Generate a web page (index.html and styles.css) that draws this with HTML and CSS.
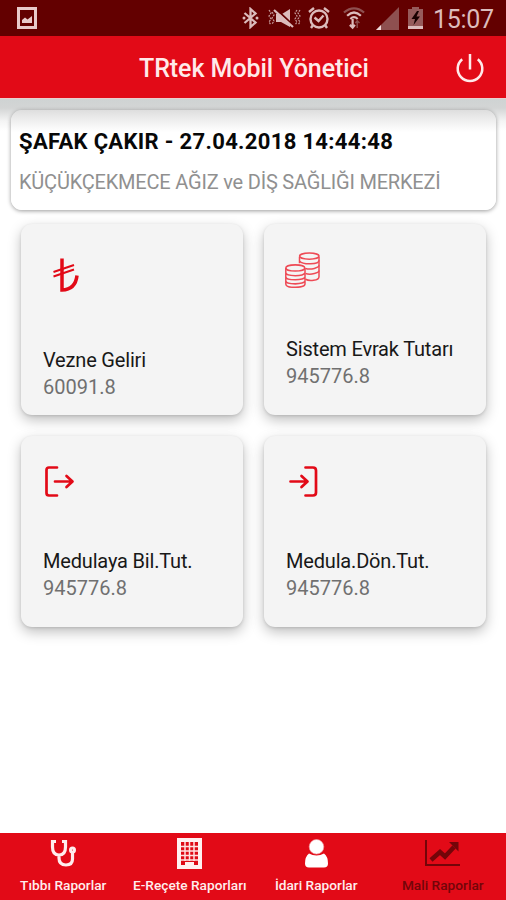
FILE: index.html
```html
<!DOCTYPE html>
<html lang="tr">
<head>
  <meta charset="UTF-8" />
  <meta name="viewport" content="width=device-width, initial-scale=1.0"/>
  <title>TRtek Mobil Yönetici</title>
  <link rel="stylesheet" href="styles.css">
</head>
<body>
  <div class="statusbar">
    <svg width="20" height="22" viewBox="0 0 20 22"><path d="M1.500 1.500H18.500V20.500H1.500Z" fill="none" stroke="#e8caca" stroke-width="3"/><path d="M5 16V13L8 10.500L10.500 12.500L15 9V16Z" fill="#e8caca"/></svg>
    <div class="status-icons">
      <svg width="17" height="22" viewBox="0 0 17 22" fill="none" stroke="#dcbcbc" stroke-width="2.300"><path d="M2.500 6L13.500 15.500L8.500 20V2L13.500 6.500L2.500 16"/><circle cx="2" cy="11" r="1.500" fill="#dcbcbc" stroke="none"/><circle cx="15" cy="11" r="1.500" fill="#dcbcbc" stroke="none"/></svg>
      <svg width="34" height="22" viewBox="0 0 34 22" fill="none"><path d="M9 7H15L23 2V20L14 15H9Z" fill="#dcbcbc"/><path d="M9 2L28 20" stroke="#630000" stroke-width="2"/><path d="M7 3L26 20" stroke="#dcbcbc" stroke-width="2.200"/><path d="M2 3L4 6L2 9L4 12L2 15L4 18M5 5L7 8L5 11L7 14L5 17M30 3L28 6L30 9L28 12L30 15L28 18M33 3L31 6L33 9L31 12L33 15L31 18" stroke="#c69c9c" stroke-width="1.200" stroke-dasharray="2 1"/></svg>
      <svg width="22" height="22" viewBox="0 0 22 22" fill="none" stroke="#dcbcbc" stroke-width="2.400"><circle cx="11" cy="12" r="8.500"/><path d="M1 5L6 1M21 5L16 1M6.500 10.500L10.500 14L15.500 8.500M5 18L3 21M17 18L19 21"/></svg>
      <svg width="22" height="24" viewBox="0 0 24 24" fill="none" stroke="#dcbcbc" stroke-width="2.400"><path d="M1 6Q12-3 23 6" stroke="#8e5050"/><path d="M4.500 9.500Q12 2.500 19.500 9.500M8 13Q12 9 16 13"/><path d="M10.500 13V23M7.500 19.500L10.500 22.500L13 19.500"/><path d="M15.500 23V15M13.500 17.500L15.500 15L18 17.500" stroke="#8e5050" stroke-width="1.500"/></svg>
      <svg width="23" height="23" viewBox="0 0 23 23"><path d="M0 23L23 0V23Z" fill="#8e5050"/><path d="M0 23L5 18V23Z" fill="#f0dada"/></svg>
      <svg width="15" height="22" viewBox="0 0 15 22"><path d="M4 0H11V2H15V22H0V2H4Z" fill="#965b5b"/><path d="M0 19H15V22H0Z" fill="#dcbcbc"/><path d="M9 4L3.500 12H7L5.500 18L12 9.500H8.500L11 4Z" fill="#180000"/></svg>
    </div>
    <span class="clock">15:07</span>
  </div>

  <header class="header">
    <h1>TRtek Mobil Yönetici</h1>
    <svg class="power" width="28" height="30" viewBox="0 0 28 30" fill="none" stroke="#ffe9e9" stroke-width="2.500"><path d="M14 1V16.500"/><path d="M6.200 6.200A12.300 12.300 0 1 0 21.800 6.200"/></svg>
  </header>

  <main class="content">
    <div class="info">
      <h2>ŞAFAK ÇAKIR - 27.04.2018 14:44:48</h2>
      <p>KÜÇÜKÇEKMECE AĞIZ ve DİŞ SAĞLIĞI MERKEZİ</p>
    </div>

    <div class="cards">
      <div class="card card-low">
        <svg width="46" height="46" viewBox="0 0 46 46" fill="none" stroke="#e20a17"><path d="M19 4.500V36Q32.500 35.500 34 21.500" stroke-width="3.500"/><path d="M10.500 18L31 11M10.500 22.500L31 15.500" stroke-width="2"/></svg>
        <h3>Vezne Geliri</h3>
        <p>60091.8</p>
      </div>
      <div class="card">
        <svg class="coins" width="35" height="36" viewBox="0 0 35 35" preserveAspectRatio="none" fill="none" stroke="#ee4a55" stroke-width="1.500"><path d="M14.500 4.500V11M34 4.500V24C34 28 24 28.500 20.500 26.500"/><ellipse cx="24.300" cy="4" rx="9.700" ry="3"/><path d="M14.500 9C18 12.500 34 12.500 34 8M20.500 16C26 17.500 34 15.500 34 13M20.500 21C26 22.500 34 20.500 34 18"/><ellipse cx="10.300" cy="15.500" rx="9.500" ry="3"/><path d="M.8 15.500V31C.8 35.500 20 35.500 20 31V15.500M.8 20C.8 24 20 24 20 20M.8 24C.8 28 20 28 20 24M.8 28C.8 32 20 32 20 28"/></svg>
        <h3>Sistem Evrak Tutarı</h3>
        <p>945776.8</p>
      </div>
      <div class="card">
        <svg width="32" height="32" viewBox="0 0 32 32" fill="none" stroke="#e20a17" stroke-width="2.700" stroke-linecap="round" stroke-linejoin="round"><path d="M14 1.500H6Q3.500 1.500 3.500 4V27Q3.500 29.500 6 29.500H14M12 15.500H29M23.500 10L29.500 15.500L23.500 21"/></svg>
        <h3>Medulaya Bil.Tut.</h3>
        <p>945776.8</p>
      </div>
      <div class="card">
        <svg width="32" height="32" viewBox="0 0 32 32" fill="none" stroke="#e20a17" stroke-width="2.700" stroke-linecap="round" stroke-linejoin="round"><path d="M19.500 1.500H27Q30 1.500 30 4.500V26.500Q30 29.500 27 29.500H19.500M4.500 15.500H21M15.500 10L21.500 15.500L15.500 21"/></svg>
        <h3>Medula.Dön.Tut.</h3>
        <p>945776.8</p>
      </div>
    </div>
  </main>

  <nav class="tabs">
    <div class="tab">
      <svg width="26" height="30" viewBox="0 0 26 30" fill="none" stroke="#ffeded" stroke-width="3.200"><path d="M6 3.500H2.500V9Q2.500 17 9 17Q15.500 17 15.500 9V3.500H12M9 17V20Q9 27 16 27Q22.500 27 22.500 21V15"/><circle cx="22.500" cy="12" r="2" stroke-width="3"/></svg>
      <span>Tıbbı Raporlar</span>
    </div>
    <div class="tab">
      <svg width="25" height="31" viewBox="0 0 25 31"><path d="M0 0H25V31H0Z" fill="#fff0f0"/><path d="M4 4H21V27H17V24H8V27H4Z" fill="#df0a16"/><path d="M8 4V23M12.500 4V23M17 4V23M4 8.500H21M4 13H21M4 17.500H21M4 22H21" stroke="#ffe1e1" stroke-width="1.500"/></svg>
      <span>E-Reçete Raporları</span>
    </div>
    <div class="tab">
      <svg width="23" height="30" viewBox="0 -1.500 23 30" fill="#fff"><path d="M4 14Q7.500 16 11.500 16Q15.500 16 19 14Q23 17 23 24Q23 28 19 28H4Q0 28 0 24Q0 17 4 14Z"/><circle cx="11.500" cy="7.300" r="7.300" stroke="#f3a0a4" stroke-width=".6"/></svg>
      <span>İdari Raporlar</span>
    </div>
    <div class="tab active">
      <svg width="35" height="30" viewBox="0 -2 35 30" fill="none" stroke="#730509"><path d="M1 0V25H35" stroke-width="2"/><path d="M6 20L15 12L20 16.500L29 7" stroke-width="4.500"/><path d="M24 2H33.500V11.500Z" fill="#730509" stroke="none"/></svg>
      <span>Mali Raporlar</span>
    </div>
  </nav>
</body>
</html>
```
FILE: styles.css
```css
* {
  box-sizing: border-box;
}
body {
  margin: 0;
  height: 900px;
  display: flex;
  flex-direction: column;
  overflow: hidden;
  background: #fff;
  font-family: Roboto, "Liberation Sans", sans-serif;
}
h1, h2, h3, p {
  margin: 0;
  font-weight: 400;
  white-space: nowrap;
}
svg {
  display: block;
  flex: none;
}
.statusbar {
  height: 36px;
  display: flex;
  align-items: center;
  padding: 0 12px 0 17px;
  background: #630000;
}
.status-icons {
  display: flex;
  align-items: center;
  margin-left: auto;
  margin-right: 10px;
}
.status-icons svg:nth-child(2) { margin-left: 8px; }
.status-icons svg:nth-child(3) { margin-left: 7px; }
.status-icons svg:nth-child(4) { margin-left: 13px; }
.status-icons svg:nth-child(5) { margin-left: 11px; }
.status-icons svg:nth-child(6) { margin-left: 9px; }
.clock {
  width: 61px;
  padding-top: 3px;
  font-size: 25px;
  line-height: 30px;
  letter-spacing: -0.3px;
  color: #dcbcbc;
}
.header {
  height: 62px;
  display: flex;
  align-items: center;
  padding-left: 139px;
  padding-right: 22px;
  background: #e20a17;
}
.header h1 {
  flex: 1;
  padding-top: 4px;
  font-size: 25px;
  line-height: 30px;
  font-weight: 500;
  letter-spacing: -0.06px;
  color: #ffe9e9;
}
.power {
  margin-top: 2px;
}
.content {
  flex: 1;
  padding: 11px 10px 0 11px;
  border-top: 1px solid #ead0d0;
  background: linear-gradient(#cfd3d3 0, #d3d5d5 9px, #f4f4f4 22px, #fff 32px);
}
.info {
  height: 100px;
  padding: 18px 8px;
  border-radius: 11px;
  background: linear-gradient(#dedede, #f1f1f1 12px, #fff 22px);
  box-shadow: 0 1px 4px rgba(0, 0, 0, .4);
}
.info h2 {
  font-size: 22px;
  line-height: 28px;
  font-weight: 700;
  letter-spacing: 0.33px;
  color: #080808;
}
.info p {
  margin-top: 12px;
  font-size: 20px;
  line-height: 28px;
  letter-spacing: -0.2px;
  color: #909090;
}
.cards {
  display: grid;
  grid-template-columns: 222px 222px;
  gap: 21px;
  padding: 14px 0 0 10px;
}
.card {
  height: 191px;
  display: flex;
  flex-direction: column;
  padding: 30px 22px 25px;
  border-radius: 11px;
  background: #f4f4f4;
  box-shadow: 0 5px 13px rgba(0, 0, 0, .25), 0 1px 3px rgba(0, 0, 0, .12);
}
.card-low {
  padding-bottom: 14px;
}
.coins {
  margin: -2px 0 0 -1px;
}
.card h3 {
  margin-top: auto;
  font-size: 20px;
  line-height: 27px;
  letter-spacing: -0.18px;
  color: #181818;
}
.card p {
  font-size: 20px;
  line-height: 27px;
  color: #707070;
}
.tabs {
  height: 67px;
  display: grid;
  grid-template-columns: repeat(4, 1fr);
  background: #e20a17;
}
.tab {
  display: flex;
  flex-direction: column;
  align-items: center;
  padding-top: 5px;
  color: #ffeded;
  font-size: 13.7px;
  font-weight: 500;
  white-space: nowrap;
}
.tab span {
  margin-top: auto;
  padding-bottom: 6px;
  line-height: 18px;
}
.tab.active {
  color: #730509;
}
```
